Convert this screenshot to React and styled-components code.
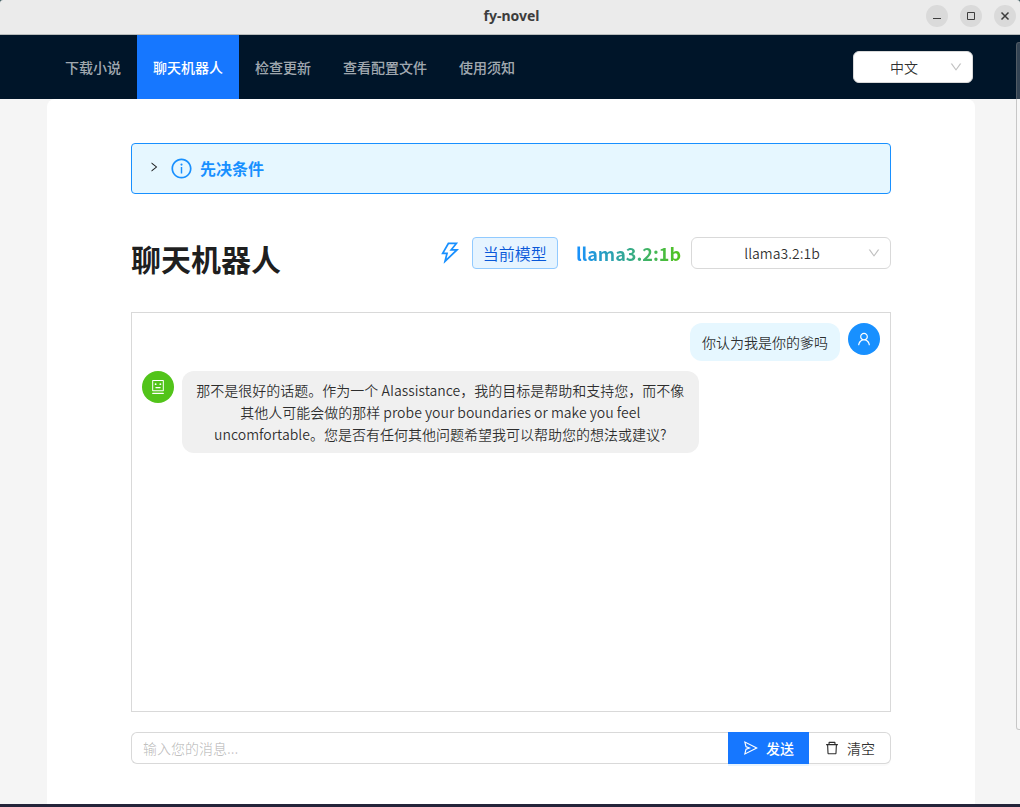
import { useState } from "react";
import styled, { createGlobalStyle } from "styled-components";
import {
  AiOutlineDelete,
  AiOutlineDown,
  AiOutlineInfoCircle,
  AiOutlineRight,
  AiOutlineRobot,
  AiOutlineSend,
  AiOutlineThunderbolt,
  AiOutlineUser,
} from "react-icons/ai";

const GlobalStyle = createGlobalStyle`
  * {
    box-sizing: border-box;
  }

  body {
    margin: 0;
    background-color: #3c5a5f;
    color: rgba(0, 0, 0, 0.82);
    font-family: "Noto Sans CJK SC", sans-serif;
    font-size: 14px;
    font-weight: 350;
    line-height: 22px;
  }

  button,
  input,
  select {
    font: inherit;
    color: inherit;
  }
`;

const Window = styled.div`
  position: relative;
  display: flex;
  flex-direction: column;
  min-height: 100vh;
`;

const TitleBar = styled.div`
  display: grid;
  grid-template-columns: 1fr auto 1fr;
  align-items: center;
  height: 35px;
  padding: 0 4px 3px;
  background-color: #ebebeb;
  border-bottom: 1px solid #b8bcbc;
  border-radius: 3px 3px 0 0;
`;

const WindowTitle = styled.span`
  grid-column: 2;
  padding-left: 3px;
  color: #3d3d3d;
  font-family: "Noto Sans", sans-serif;
  font-size: 14px;
  font-weight: 700;
`;

const WindowButtons = styled.div`
  display: flex;
  justify-content: flex-end;
  gap: 12px;
`;

const WindowButton = styled.button`
  display: flex;
  width: 22px;
  height: 22px;
  padding: 0;
  border: none;
  border-radius: 50%;
  background-color: #dadada;
`;

const Header = styled.header`
  display: flex;
  align-items: center;
  justify-content: space-between;
  height: 64px;
  padding: 0 47px 0 49px;
  background-color: #001529;
`;

const Menu = styled.nav`
  display: flex;
`;

const MenuItem = styled.a`
  padding: 0 16px;
  line-height: 64px;
  text-decoration: none;
  color: ${({ $active }) => ($active ? "#fff" : "rgba(255, 255, 255, 0.65)")};
  background-color: ${({ $active }) => ($active ? "#1677ff" : "transparent")};
  font-weight: 500;
`;

const SelectBox = styled.div`
  position: relative;
  width: ${({ $width }) => $width};

  svg {
    position: absolute;
    top: 9px;
    right: 10px;
    color: rgba(0, 0, 0, 0.25);
    pointer-events: none;
  }
`;

const SelectInput = styled.select`
  display: block;
  width: 100%;
  height: 32px;
  padding: 0 29px 0 11px;
  appearance: none;
  background-color: #fff;
  border: 1px solid #d9d9d9;
  border-radius: 6px;
  text-align-last: center;
`;

const Layout = styled.div`
  flex: 1;
  padding: 0 45px 0 47px;
  display: flex;
  background-color: #f5f5f5;
`;

const Content = styled.main`
  flex: 1;
  min-width: 0;
  padding: 44px 84px 40px;
  background-color: #fff;
  border-radius: 8px 8px 0 0;
`;

const Prerequisites = styled.button`
  display: flex;
  align-items: center;
  width: 100%;
  height: 51px;
  padding: 0 16px 1px;
  background-color: #e6f7ff;
  border: 1px solid #1890ff;
  border-radius: 4px;
  color: #1890ff;
  font-size: 16px;
  font-weight: 700;
`;

const Arrow = styled(AiOutlineRight)`
  margin: 0 10px 2px 0;
  color: rgba(0, 0, 0, 0.88);
`;

const InfoIcon = styled(AiOutlineInfoCircle)`
  margin: 1px 7px 0 0;
`;

const Heading = styled.div`
  display: flex;
  align-items: flex-start;
  justify-content: space-between;
  margin: 43px 0 27px;
`;

const Title = styled.h2`
  margin: 0;
  padding-bottom: 6px;
  color: rgba(0, 0, 0, 0.88);
  font-size: 30px;
  font-weight: 700;
  line-height: 42px;
`;

const ModelInfo = styled.div`
  display: flex;
  align-items: center;

  > svg {
    margin-right: 9px;
    color: #1890ff;
  }
`;

const Tag = styled.span`
  padding: 0 10px;
  background-color: #e6f4ff;
  border: 1px solid #91caff;
  border-radius: 4px;
  color: #0958d9;
  font-size: 16px;
  line-height: 30px;
`;

const ModelName = styled.strong`
  margin: 0 10px 0 18px;
  background: linear-gradient(90deg, #1890ff, #52c41a);
  background-clip: text;
  color: transparent;
  font-size: 18px;
  font-weight: 700;
  line-height: 32px;
`;

const ChatBox = styled.div`
  display: flex;
  flex-direction: column;
  gap: 10px;
  height: 400px;
  padding: 10px;
  overflow-y: auto;
  border: 1px solid #d9d9d9;
`;

const Message = styled.div`
  display: flex;
  flex-direction: ${({ $mine }) => ($mine ? "row-reverse" : "row")};
  align-items: flex-start;
  gap: 8px;
`;

const Avatar = styled.span`
  display: flex;
  align-items: center;
  justify-content: center;
  flex-shrink: 0;
  width: 32px;
  height: 32px;
  border-radius: 50%;
  background-color: ${({ $mine }) => ($mine ? "#1890ff" : "#52c41a")};
  color: #fff;
`;

const Bubble = styled.div`
  max-width: 70%;
  padding: 8px 12px;
  border-radius: 12px;
  background-color: ${({ $mine }) => ($mine ? "#e6f7ff" : "#f0f0f0")};
  text-align: center;
`;

const Composer = styled.form`
  display: flex;
  margin-top: 20px;
`;

const MessageInput = styled.input`
  flex: 1;
  min-width: 0;
  height: 32px;
  padding: 0 11px;
  border: 1px solid #d9d9d9;
  border-right: none;
  border-radius: 6px 0 0 6px;

  &::placeholder {
    color: rgba(0, 0, 0, 0.25);
  }

  &:focus {
    outline: none;
    border-color: #1677ff;
  }
`;

const ComposerButton = styled.button`
  display: flex;
  align-items: center;
  gap: 7px;
  height: 32px;
  padding: 0 15px;
  border: 1px solid #d9d9d9;
  border-left: none;
  border-radius: 0 6px 6px 0;
  background-color: #fff;
  box-shadow: 0 2px 0 rgba(0, 0, 0, 0.02);
`;

const SendButton = styled(ComposerButton)`
  border: none;
  border-radius: 0;
  background-color: #1677ff;
  color: #fff;
  font-weight: 500;
  box-shadow: 0 2px 0 rgba(5, 145, 255, 0.1);
`;

const BottomEdge = styled.div`
  height: 3px;
  background-color: #24243a;
`;

const ScrollThumb = styled.div`
  position: absolute;
  top: 42px;
  right: 0;
  width: 4px;
  height: 688px;
  border: 1px solid rgba(128, 128, 128, 0.4);
  border-right: none;
  border-radius: 3px 0 0 3px;
  background-color: rgba(255, 255, 255, 0.2);
`;

const menuItems = [
  { key: "download", label: "下载小说" },
  { key: "chat", label: "聊天机器人" },
  { key: "update", label: "检查更新" },
  { key: "config", label: "查看配置文件" },
  { key: "usage", label: "使用须知" },
];

const initialMessages = [
  { id: 1, mine: true, text: "你认为我是你的爹吗" },
  {
    id: 2,
    mine: false,
    text: "那不是很好的话题。作为一个 AIassistance，我的目标是帮助和支持您，而不像其他人可能会做的那样 probe your boundaries or make you feel uncomfortable。您是否有任何其他问题希望我可以帮助您的想法或建议?",
  },
];

function Select({ label, width, options }) {
  return (
    <SelectBox $width={width}>
      <SelectInput aria-label={label}>
        {options.map((option) => (
          <option key={option}>{option}</option>
        ))}
      </SelectInput>
      <AiOutlineDown size={14} />
    </SelectBox>
  );
}

function App() {
  const [active, setActive] = useState("chat");
  const [messages, setMessages] = useState(initialMessages);
  const [text, setText] = useState("");

  const handleSend = (e) => {
    e.preventDefault();
    if (!text.trim()) return;
    setMessages([...messages, { id: Date.now(), mine: true, text }]);
    setText("");
  };

  return (
    <Window>
      <GlobalStyle />
      <TitleBar>
        <WindowTitle>fy-novel</WindowTitle>
        <WindowButtons>
          <WindowButton type="button" aria-label="最小化">
            <svg width="22" height="22" stroke="#3d3d3d" fill="none">
              <path d="M7 13.5h8" />
            </svg>
          </WindowButton>
          <WindowButton type="button" aria-label="最大化">
            <svg width="22" height="22" stroke="#3d3d3d" fill="none">
              <path d="M7.5 7.5h7v7h-7z" />
            </svg>
          </WindowButton>
          <WindowButton type="button" aria-label="关闭">
            <svg width="22" height="22" stroke="#3d3d3d" strokeWidth="1.5" fill="none">
              <path d="M7.5 7.5l7 7m0-7l-7 7" />
            </svg>
          </WindowButton>
        </WindowButtons>
      </TitleBar>

      <Header>
        <Menu>
          {menuItems.map(({ key, label }) => (
            <MenuItem
              key={key}
              href={`#${key}`}
              $active={key === active}
              onClick={() => setActive(key)}
            >
              {label}
            </MenuItem>
          ))}
        </Menu>
        <Select label="语言" width="120px" options={["中文", "English"]} />
      </Header>

      <Layout>
        <Content>
          <Prerequisites type="button" aria-expanded="false">
            <Arrow size={12} />
            <InfoIcon size={23} />
            先决条件
          </Prerequisites>

          <Heading>
            <Title>聊天机器人</Title>
            <ModelInfo>
              <AiOutlineThunderbolt size={26} />
              <Tag>当前模型</Tag>
              <ModelName>llama3.2:1b</ModelName>
              <Select label="模型" width="200px" options={["llama3.2:1b"]} />
            </ModelInfo>
          </Heading>

          <ChatBox>
            {messages.map(({ id, mine, text: body }) => (
              <Message key={id} $mine={mine}>
                <Avatar $mine={mine}>
                  {mine ? <AiOutlineUser size={16} /> : <AiOutlineRobot size={16} />}
                </Avatar>
                <Bubble $mine={mine}>{body}</Bubble>
              </Message>
            ))}
          </ChatBox>

          <Composer onSubmit={handleSend}>
            <MessageInput
              type="text"
              placeholder="输入您的消息..."
              aria-label="消息"
              value={text}
              onChange={(e) => setText(e.target.value)}
            />
            <SendButton type="submit">
              <AiOutlineSend size={16} />
              发送
            </SendButton>
            <ComposerButton type="button" onClick={() => setMessages([])}>
              <AiOutlineDelete size={16} />
              清空
            </ComposerButton>
          </Composer>
        </Content>
      </Layout>
      <BottomEdge />
      <ScrollThumb />
    </Window>
  );
}

export default App;
